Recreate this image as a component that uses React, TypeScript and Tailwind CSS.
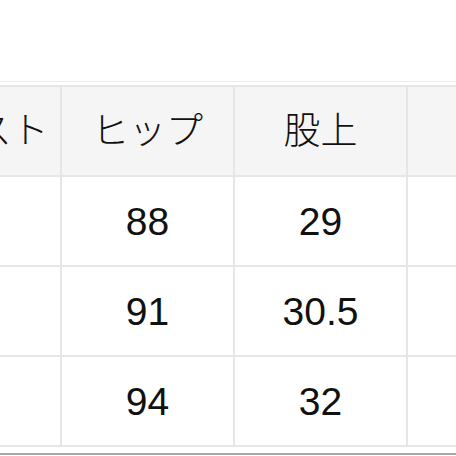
const header = ["ウエスト", "ヒップ", "股上", ""];
const rows = [
  ["", "88", "29", ""],
  ["", "91", "30.5", ""],
  ["", "94", "32", ""],
];

export default function App() {
  return (
    <div
      className="w-[456px] h-[456px] overflow-hidden bg-white text-[#111111] font-light"
      style={{ fontFamily: '"Liberation Sans", "Noto Sans CJK JP", sans-serif' }}
    >
      <div className="h-[81px]" />
      <div className="h-px bg-[#eeeeee]" />
      <div className="h-[3px]" />
      <div className="ml-[-111px] w-[700px] grid grid-cols-[171px_171px_171px_171px] gap-[2px] py-[2px] bg-[#e6e6e6]">
        {header.map((h, i) => (
          <div
            key={"h" + i}
            className="h-[88px] bg-[#f5f5f5] flex items-center justify-center text-[37px] leading-none"
          >
            {h}
          </div>
        ))}
        {rows.map((r, ri) =>
          r.map((c, ci) => (
            <div
              key={ri + "-" + ci}
              className="h-[88px] bg-white flex items-center justify-center text-[39px] leading-none"
            >
              {c}
            </div>
          ))
        )}
      </div>
      <div className="h-[6px]" />
      <div className="h-[2px] bg-[#a8a8a8]" />
    </div>
  );
}
